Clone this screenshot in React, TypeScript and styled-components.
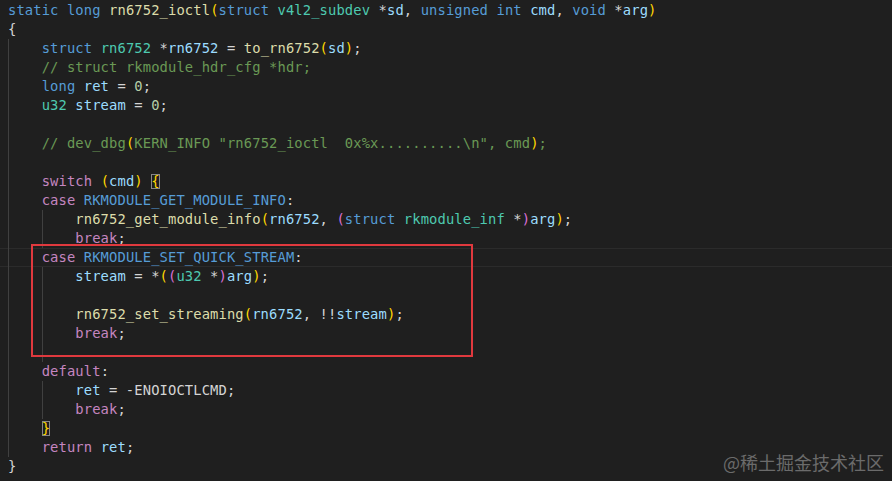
import React from "react";
import styled, { createGlobalStyle } from "styled-components";

const GlobalStyle = createGlobalStyle`
  html, body {
    margin: 0;
    padding: 0;
    background: #1f1f1f;
  }
  #root {
    width: 892px;
    height: 481px;
    overflow: hidden;
  }
`;

type Kind =
  | "kw"
  | "ctrl"
  | "type"
  | "fn"
  | "var"
  | "num"
  | "cmt"
  | "pl"
  | "b1"
  | "b2"
  | "mac"
  | "match";

const palette: Record<Kind, string> = {
  kw: "#569cd6",
  ctrl: "#c586c0",
  type: "#4ec9b0",
  fn: "#dcdcaa",
  var: "#9cdcfe",
  num: "#b5cea8",
  cmt: "#6a9955",
  pl: "#d4d4d4",
  b1: "#ffd700",
  b2: "#da70d6",
  mac: "#569cd6",
  match: "#ffd700",
};

type Tok = [string, Kind];
type LineData = { guides: number; indent: number; current?: boolean; toks: Tok[] };

const Editor = styled.div`
  position: relative;
  width: 892px;
  height: 481px;
  background: #1f1f1f;
  padding: 1px 0 0 8px;
  box-sizing: border-box;
  font-family: "DejaVu Sans Mono", "Liberation Mono", monospace;
  font-size: 13.8px;
  letter-spacing: 0.115px;
  white-space: pre;
  display: flex;
  flex-direction: column;
`;

const Line = styled.div<{ $current?: boolean }>`
  height: 19px;
  line-height: 19px;
  display: flex;
  align-items: center;
  margin-left: -8px;
  padding-left: 8px;
  box-shadow: ${(p) =>
    p.$current ? "inset 0 1px 0 #2b2b2b, inset 0 -1px 0 #2b2b2b" : "none"};
`;

const IndentUnit = styled.span<{ $guide: boolean }>`
  display: inline-block;
  width: calc(4ch + 0.46px);
  height: 19px;
  box-shadow: ${(p) => (p.$guide ? "inset 1px 0 0 #404040" : "none")};
`;

const Token = styled.span<{ $kind: Kind }>`
  color: ${(p) => palette[p.$kind]};
`;

const MatchBracket = styled.span`
  display: inline-block;
  height: 15px;
  line-height: 15px;
  color: #ffd700;
  box-shadow: inset 0 0 0 1px #888888;
`;

const Annotation = styled.div`
  position: absolute;
  left: 31px;
  top: 244px;
  width: 442px;
  height: 113px;
  box-sizing: border-box;
  border: 2px solid #e0393e;
  pointer-events: none;
`;

const Watermark = styled.div`
  position: absolute;
  right: 8px;
  bottom: 8px;
  font-family: "Noto Sans CJK SC", "Noto Sans", sans-serif;
  font-size: 18px;
  line-height: 22px;
  letter-spacing: 0;
  color: #6b6b6b;
  white-space: nowrap;
`;

const lines: LineData[] = [
  {
    guides: 0,
    indent: 0,
    toks: [
      ["static", "kw"], [" ", "pl"], ["long", "kw"], [" ", "pl"], ["rn6752_ioctl", "fn"],
      ["(", "b1"], ["struct", "kw"], [" ", "pl"], ["v4l2_subdev", "type"], [" *", "pl"],
      ["sd", "var"], [", ", "pl"], ["unsigned", "kw"], [" ", "pl"], ["int", "kw"], [" ", "pl"],
      ["cmd", "var"], [", ", "pl"], ["void", "kw"], [" *", "pl"], ["arg", "var"], [")", "b1"],
    ],
  },
  { guides: 0, indent: 0, toks: [["{", "pl"]] },
  {
    guides: 1,
    indent: 1,
    toks: [
      ["struct", "kw"], [" ", "pl"], ["rn6752", "type"], [" *", "pl"], ["rn6752", "var"],
      [" = ", "pl"], ["to_rn6752", "fn"], ["(", "b1"], ["sd", "var"], [")", "b1"], [";", "pl"],
    ],
  },
  { guides: 1, indent: 1, toks: [["// struct rkmodule_hdr_cfg *hdr;", "cmt"]] },
  {
    guides: 1,
    indent: 1,
    toks: [["long", "kw"], [" ", "pl"], ["ret", "var"], [" = ", "pl"], ["0", "num"], [";", "pl"]],
  },
  {
    guides: 1,
    indent: 1,
    toks: [["u32", "type"], [" ", "pl"], ["stream", "var"], [" = ", "pl"], ["0", "num"], [";", "pl"]],
  },
  { guides: 1, indent: 1, toks: [] },
  {
    guides: 1,
    indent: 1,
    toks: [
      ["// dev_dbg", "cmt"], ["(", "b1"],
      ["KERN_INFO \"rn6752_ioctl  0x%x..........\\n\", cmd", "cmt"], [")", "b1"], [";", "cmt"],
    ],
  },
  { guides: 1, indent: 1, toks: [] },
  {
    guides: 1,
    indent: 1,
    toks: [["switch", "ctrl"], [" ", "pl"], ["(", "b1"], ["cmd", "var"], [")", "b1"], [" ", "pl"], ["{", "match"]],
  },
  {
    guides: 1,
    indent: 1,
    toks: [["case", "ctrl"], [" ", "pl"], ["RKMODULE_GET_MODULE_INFO", "mac"], [":", "pl"]],
  },
  {
    guides: 2,
    indent: 2,
    toks: [
      ["rn6752_get_module_info", "fn"], ["(", "b1"], ["rn6752", "var"], [", ", "pl"], ["(", "b2"],
      ["struct", "kw"], [" ", "pl"], ["rkmodule_inf", "type"], [" *", "pl"], [")", "b2"],
      ["arg", "var"], [")", "b1"], [";", "pl"],
    ],
  },
  { guides: 2, indent: 2, toks: [["break", "ctrl"], [";", "pl"]] },
  {
    guides: 1,
    indent: 1,
    current: true,
    toks: [["case", "ctrl"], [" ", "pl"], ["RKMODULE_SET_QUICK_STREAM", "mac"], [":", "pl"]],
  },
  {
    guides: 2,
    indent: 2,
    toks: [
      ["stream", "var"], [" = *", "pl"], ["(", "b1"], ["(", "b2"], ["u32", "type"], [" *", "pl"],
      [")", "b2"], ["arg", "var"], [")", "b1"], [";", "pl"],
    ],
  },
  { guides: 2, indent: 2, toks: [] },
  {
    guides: 2,
    indent: 2,
    toks: [
      ["rn6752_set_streaming", "fn"], ["(", "b1"], ["rn6752", "var"], [", !!", "pl"],
      ["stream", "var"], [")", "b1"], [";", "pl"],
    ],
  },
  { guides: 2, indent: 2, toks: [["break", "ctrl"], [";", "pl"]] },
  { guides: 2, indent: 2, toks: [] },
  { guides: 1, indent: 1, toks: [["default", "ctrl"], [":", "pl"]] },
  {
    guides: 2,
    indent: 2,
    toks: [["ret", "var"], [" = -", "pl"], ["ENOIOCTLCMD", "pl"], [";", "pl"]],
  },
  { guides: 2, indent: 2, toks: [["break", "ctrl"], [";", "pl"]] },
  { guides: 1, indent: 1, toks: [["}", "match"]] },
  { guides: 1, indent: 1, toks: [["return", "ctrl"], [" ", "pl"], ["ret", "var"], [";", "pl"]] },
  { guides: 0, indent: 0, toks: [["}", "pl"]] },
];

function CodeLine({ data }: { data: LineData }) {
  const units = [];
  for (let i = 0; i < data.indent; i++) {
    // guide at col 0 for all body lines, col 4 only for case-body lines
    const guide = i === 0 ? data.guides >= 1 : data.guides >= 2;
    units.push(<IndentUnit key={i} $guide={guide} />);
  }
  return (
    <Line $current={data.current}>
      {units}
      {data.toks.map(([text, kind], i) =>
        kind === "match" ? (
          <MatchBracket key={i}>{text}</MatchBracket>
        ) : (
          <Token key={i} $kind={kind}>
            {text}
          </Token>
        )
      )}
    </Line>
  );
}

export default function App() {
  return (
    <>
      <GlobalStyle />
      <Editor>
        {lines.map((l, i) => (
          <CodeLine key={i} data={l} />
        ))}
        <Annotation />
        <Watermark>@稀土掘金技术社区</Watermark>
      </Editor>
    </>
  );
}
